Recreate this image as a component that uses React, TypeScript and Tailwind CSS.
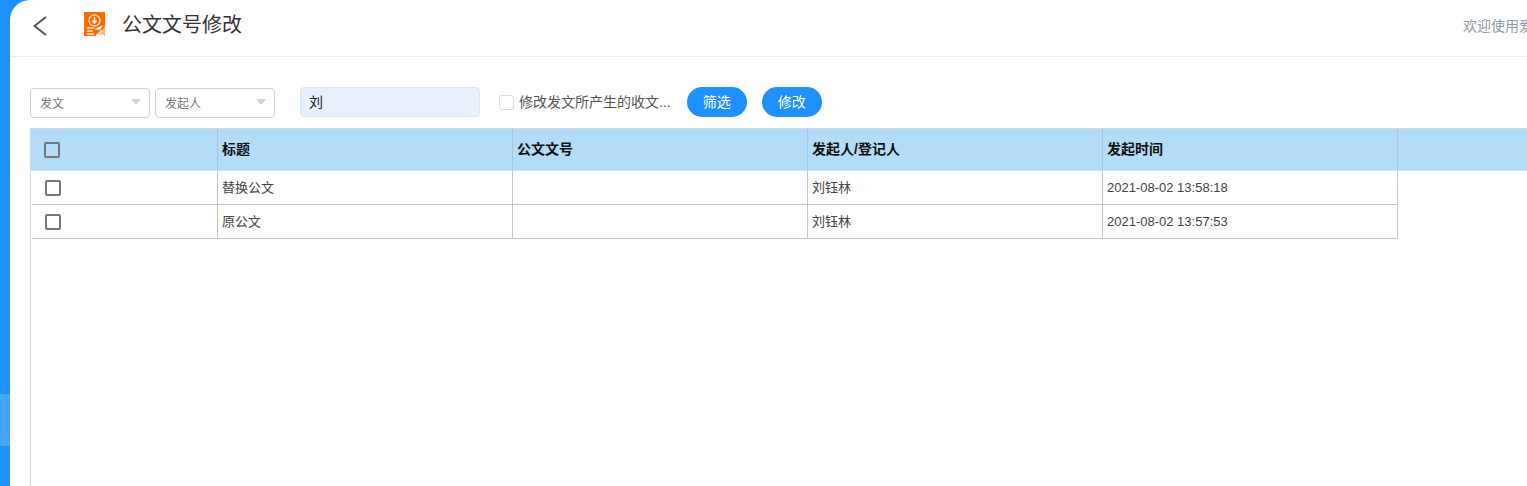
const columns = [
  { label: '标题', width: 'w-[295px]' },
  { label: '公文文号', width: 'w-[295px]' },
  { label: '发起人/登记人', width: 'w-[295px]' },
  { label: '发起时间', width: 'w-[295px]' },
];

const rows = [
  { title: '替换公文', no: '', sender: '刘钰林', time: '2021-08-02 13:58:18' },
  { title: '原公文', no: '', sender: '刘钰林', time: '2021-08-02 13:57:53' },
];

function Logo() {
  return (
    <svg width="21" height="24" viewBox="0 0 21 24" className="shrink-0">
      <rect width="21" height="24" fill="#ff6a00" />
      <path d="M14 24h7v-10z" fill="#ffb27a" />
      <circle cx="10.500" cy="8.500" r="5.500" fill="none" stroke="#ffd9bd" strokeWidth="1.400" />
      <path d="M10.500 5v5M8.500 8.500l2 2.500 2-2.500" fill="none" stroke="#fff" strokeWidth="1.500" />
      <path d="M3 16h7M3 19h6M3 22h7" stroke="#ffe3cf" strokeWidth="1.300" />
      <path d="M10 17l9-3.500-3 4.500zM12 22.500h8v1.500h-8zM17 18.500h2.500l-6 4.500h-1.500z" fill="#fff" />
    </svg>
  );
}

function Select({ label }: { label: string }) {
  return (
    <div className="flex h-[30px] w-[120px] items-center justify-between rounded-[4px] border border-[#d0d0d0] bg-white pl-[9px] pr-[8px] text-[12px] text-[#777]">
      <span className="mt-px">{label}</span>
      <span className="mb-[3px] h-0 w-0 border-x-[5px] border-t-[6px] border-x-transparent border-t-[#d2d2d2]" />
    </div>
  );
}

function Check() {
  return <span className="block h-4 w-4 rounded-[2px] border-2 border-[#767676] bg-transparent" />;
}

export default function App() {
  return (
    <div className="flex h-screen w-full overflow-hidden bg-[#1e90ff] font-['Liberation_Sans','Noto_Sans_CJK_SC',sans-serif]">
      <div className="flex w-[10px] shrink-0 flex-col">
        <div className="h-[394px]" />
        <div className="h-[52px] bg-[#47a5ff]" />
      </div>
      <main className="flex min-w-0 flex-1 flex-col overflow-hidden rounded-tl-[20px] bg-white">
        <header className="flex h-[57px] shrink-0 items-center border-b border-[#ececec]">
          <svg width="16" height="22" viewBox="0 0 16 22" className="ml-[22px] mt-[-4px] shrink-0">
            <path d="M14 2 L2.500 11 L14 20" fill="none" stroke="#555" strokeWidth="2" />
          </svg>
          <div className="ml-[36px] mt-[-8px]">
            <Logo />
          </div>
          <h1 className="ml-[17px] mt-[-6px] whitespace-nowrap text-[20px] font-normal text-[#333]">公文文号修改</h1>
          <span className="ml-auto mt-[-4px] w-[64px] overflow-hidden whitespace-nowrap text-[14px] text-[#8d9ca8]">
            欢迎使用爱
          </span>
        </header>

        <div className="flex h-[71px] shrink-0 items-start pl-[20px] pt-[30px]">
          <div className="mt-px">
            <Select label="发文" />
          </div>
          <div className="ml-[5px] mt-px">
            <Select label="发起人" />
          </div>
          <div className="ml-[25px] flex h-[30px] w-[180px] items-center rounded-[4px] border border-[#e0e3ea] bg-[#e8f0fe] pl-2 text-[14px] text-[#222]">
            刘
          </div>
          <div className="ml-[19px] flex h-[30px] items-center">
            <span className="h-[15px] w-[15px] rounded-[3px] border border-[#dcdcdc] bg-white" />
            <span className="ml-[5px] whitespace-nowrap text-[14px] text-[#555]">修改发文所产生的收文...</span>
          </div>
          <button className="ml-[16px] h-[30px] w-[60px] rounded-full bg-[#1e90ff] text-[14px] text-white">筛选</button>
          <button className="ml-[15px] h-[30px] w-[60px] rounded-full bg-[#1e90ff] text-[14px] text-white">修改</button>
        </div>

        <div className="ml-[20px] min-h-0 flex-1 border-l border-t border-[#d9d9d9]">
          <div className="flex h-[42px] border-b border-[#cfe2f2] bg-[#b3dcf9] text-[14px] font-bold text-[#111]">
            <div className="flex w-[187px] shrink-0 items-center border-r border-[#a8c4de] pl-[13px]">
              <Check />
            </div>
            {columns.map((c) => (
              <div key={c.label} className={`flex shrink-0 items-center border-r border-[#a8c4de] pl-1 ${c.width}`}>
                {c.label}
              </div>
            ))}
          </div>
          {rows.map((r) => (
            <div key={r.time} className="ml-px flex h-[34px] w-[1366px] border-b border-[#c4c4c4] text-[13px] text-[#444]">
              <div className="flex w-[186px] shrink-0 items-center border-r border-[#c4c4c4] pl-[13px]">
                <Check />
              </div>
              <div className="flex w-[295px] shrink-0 items-center border-r border-[#c4c4c4] pl-1">{r.title}</div>
              <div className="flex w-[295px] shrink-0 items-center border-r border-[#c4c4c4] pl-1">{r.no}</div>
              <div className="flex w-[295px] shrink-0 items-center border-r border-[#c4c4c4] pl-1">{r.sender}</div>
              <div className="flex w-[295px] shrink-0 items-center border-r border-[#c4c4c4] pl-1">{r.time}</div>
            </div>
          ))}
        </div>
      </main>
    </div>
  );
}
